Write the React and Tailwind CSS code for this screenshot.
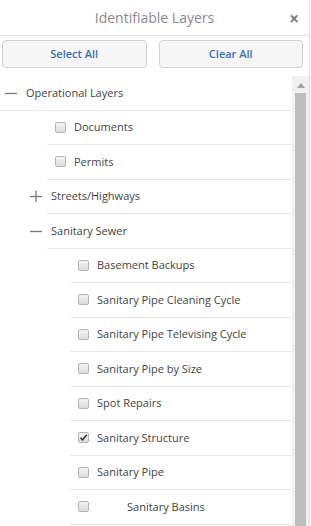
import React from "react";

const ROWS = [
  { type: "group", label: "Operational Layers", open: true, indent: 0 },
  { type: "layer", label: "Documents", indent: 1 },
  { type: "layer", label: "Permits", indent: 1 },
  { type: "group", label: "Streets/Highways", open: false, indent: 1 },
  { type: "group", label: "Sanitary Sewer", open: true, indent: 1 },
  { type: "layer", label: "Basement Backups", indent: 2 },
  { type: "layer", label: "Sanitary Pipe Cleaning Cycle", indent: 2 },
  { type: "layer", label: "Sanitary Pipe Televising Cycle", indent: 2 },
  { type: "layer", label: "Sanitary Pipe by Size", indent: 2 },
  { type: "layer", label: "Spot Repairs", indent: 2 },
  { type: "layer", label: "Sanitary Structure", indent: 2, checked: true },
  { type: "layer", label: "Sanitary Pipe", indent: 2 },
  { type: "layer", label: "Sanitary Basins", indent: 2, extra: true },
];

function Toggle({ open }) {
  return (
    <svg width="12" height="12" viewBox="0 0 12 12" className="shrink-0">
      <path d="M0 6.5h12" stroke="#777" strokeWidth="1.3" />
      {!open && <path d="M6 0.5v12" stroke="#777" strokeWidth="1.3" />}
    </svg>
  );
}

function Check({ checked }) {
  return (
    <span className="w-[11px] h-[11px] shrink-0 rounded-[2px] border border-[#b5b5b5] bg-gradient-to-b from-[#f4f4f4] to-[#dcdcdc] flex items-center justify-center">
      {checked && (
        <svg width="9" height="9" viewBox="0 0 9 9">
          <path d="M1.5 4.8l2 2L7.8 1.8" fill="none" stroke="#333" strokeWidth="1.5" />
        </svg>
      )}
    </span>
  );
}

export default function App() {
  return (
    <div
      className="w-[310px] h-[526px] bg-white border-r border-[#dcdcdc] overflow-hidden text-[#444]"
      style={{ fontFamily: '"Open Sans", "Segoe UI", sans-serif' }}
    >
      {/* Header */}
      <div className="h-[36px] border-b border-[#e3e3e3] relative flex items-center justify-center">
        <span className="text-[14px] text-[#8a8a8a]">Identifiable Layers</span>
        <span className="absolute right-[10px] top-[6px] text-[17px] font-bold text-[#7a7a7a]">×</span>
      </div>

      {/* Buttons */}
      <div className="flex gap-[12px] pl-[2px] pr-[6px] pt-[4px] h-[40px]">
        <button className="flex-1 h-[28px] rounded-[4px] border border-[#d2d2d2] bg-[#f6f6f6] text-[11px] font-semibold text-[#3671b8]">
          Select All
        </button>
        <button className="flex-1 h-[28px] rounded-[4px] border border-[#d2d2d2] bg-[#f6f6f6] text-[11px] font-semibold text-[#3671b8]">
          Clear All
        </button>
      </div>

      {/* Layer list with scrollbar */}
      <div className="flex">
        <div className="w-[292px]">
          {ROWS.map((r) => {
            const lineLeft = r.indent === 0 ? "" : r.indent === 1 ? "ml-[47px]" : "ml-[70px]";
            return (
              <div key={r.label} className={`h-[34.5px] border-b border-[#e8e8e8] ${lineLeft}`}>
                {r.type === "group" ? (
                  <div className={`h-full flex items-center gap-[9px] ${r.indent === 0 ? "pl-[5px]" : "-ml-[17px]"}`}>
                    <Toggle open={r.open} />
                    <span className="text-[11px]">{r.label}</span>
                  </div>
                ) : (
                  <div className="h-full flex items-center pl-[8px]">
                    <Check checked={r.checked} />
                    <span className={`text-[11px] ${r.extra ? "ml-[38px]" : "ml-[8px]"}`}>{r.label}</span>
                  </div>
                )}
              </div>
            );
          })}
        </div>
        {/* scrollbar */}
        <div className="w-[17px] flex flex-col bg-[#f1f1f1] pt-[2px]">
          <div className="h-[14px] flex items-center justify-center">
            <svg width="8" height="5" viewBox="0 0 8 5">
              <path d="M0 5L4 0l4 5z" fill="#a3a3a3" />
            </svg>
          </div>
          <div className="mx-[3px] mt-[1px] h-[440px] bg-[#bdbdbd]" />
        </div>
      </div>
    </div>
  );
}
